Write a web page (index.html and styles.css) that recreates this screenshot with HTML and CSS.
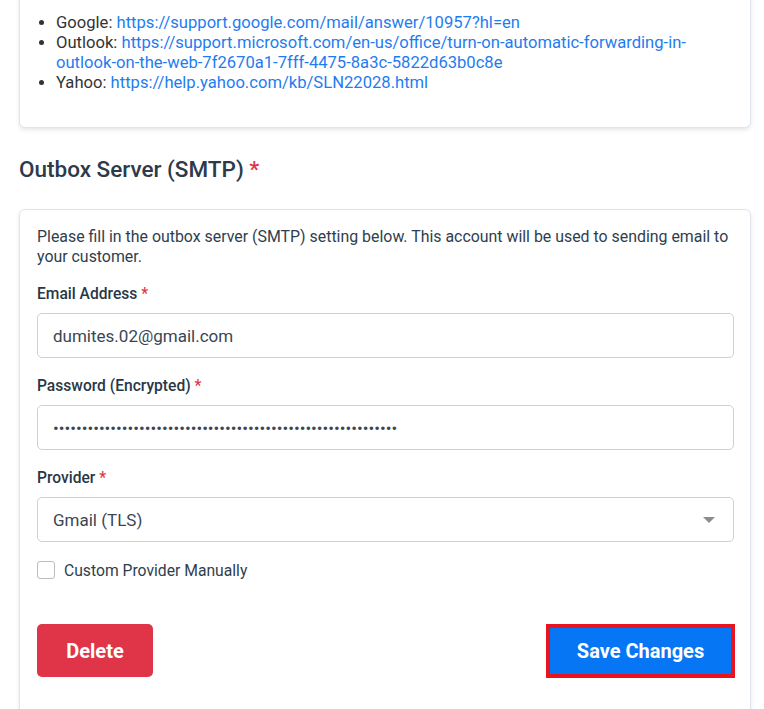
FILE: index.html
```html
<!DOCTYPE html>
<html>
<head>
<meta charset="utf-8">
<link rel="stylesheet" href="styles.css">
</head>
<body>
<div class="page">
  <div class="card card-top">
    <ul class="links">
      <li>Google: <a href="#">https://support.google.com/mail/answer/10957?hl=en</a></li>
      <li>Outlook: <a href="#">https://support.microsoft.com/en-us/office/turn-on-automatic-forwarding-in-outlook-on-the-web-7f2670a1-7fff-4475-8a3c-5822d63b0c8e</a></li>
      <li>Yahoo: <a href="#">https://help.yahoo.com/kb/SLN22028.html</a></li>
    </ul>
  </div>

  <h2 class="section-title">Outbox Server (SMTP) <span class="req">*</span></h2>

  <div class="card card-form">
    <p class="desc">Please fill in the outbox server (SMTP) setting below. This account will be used to sending email to your customer.</p>

    <div class="field">
      <label class="label">Email Address <span class="req">*</span></label>
      <input class="control" type="text" value="dumites.02@gmail.com">
    </div>

    <div class="field">
      <label class="label">Password (Encrypted) <span class="req">*</span></label>
      <input class="control" type="password" value="000000000000000000000000000000000000000000000000000000000000">
    </div>

    <div class="field">
      <label class="label">Provider <span class="req">*</span></label>
      <div class="select">
        <span>Gmail (TLS)</span>
        <span class="caret"></span>
      </div>
    </div>

    <label class="check-row">
      <span class="checkbox"></span>
      <span>Custom Provider Manually</span>
    </label>

    <div class="actions">
      <button class="btn btn-delete">Delete</button>
      <button class="btn btn-save">Save Changes</button>
    </div>
  </div>
</div>
</body>
</html>
```

FILE: styles.css
```css
* { box-sizing: border-box; }
html, body {
  margin: 0;
  padding: 0;
  background: #ffffff;
  font-family: Roboto, "Liberation Sans", sans-serif;
  color: #2b3a4a;
}
.page {
  padding: 0 13px 0 19px;
  margin-top: -28px;
}
.card {
  background: #fff;
  border: 1px solid #dfe5ea;
  border-radius: 6px;
  box-shadow: 0 2px 4px rgba(30, 50, 70, 0.12);
}
.card-top {
  padding: 40px 16px 34px 16px;
}
.links {
  margin: 0;
  padding-left: 20px;
  font-size: 16.6px;
  line-height: 20px;
  color: #333;
}
.links a {
  color: #1f7cf0;
  text-decoration: none;
}
.section-title {
  margin: 26px 0 25px 0;
  font-size: 22.5px;
  line-height: 30px;
  font-weight: 500;
  color: #2c3a49;
}
.req { color: #e03546; }
.card-form {
  padding: 17px 16px 48px 17px;
}
.desc {
  margin: 0 0 18px 0;
  font-size: 15.9px;
  line-height: 19.5px;
  color: #2f3e4e;
}
.field { margin-bottom: 18px; }
.label {
  display: block;
  font-size: 15.6px;
  line-height: 20px;
  font-weight: 500;
  color: #283747;
  margin-bottom: 9px;
}
.control, .select {
  display: flex;
  align-items: center;
  width: 100%;
  height: 45px;
  border: 1px solid #c7d3db;
  border-radius: 5px;
  padding: 0 15px;
  font-family: Roboto, "Liberation Sans", sans-serif;
  font-size: 17px;
  color: #3a4654;
  background: #fff;
  outline: none;
}
.select {
  justify-content: space-between;
}
.caret {
  width: 0;
  height: 0;
  border-left: 6px solid transparent;
  border-right: 6px solid transparent;
  border-top: 6px solid #8a8d90;
  margin-right: 3px;
}
.check-row {
  display: flex;
  align-items: center;
  gap: 9px;
  height: 20px;
  font-size: 15.7px;
  color: #2f3e4e;
}
.checkbox {
  width: 18px;
  height: 18px;
  border: 1px solid #b9bec3;
  border-radius: 3px;
  background: #fff;
}
.actions {
  display: flex;
  justify-content: space-between;
  align-items: center;
  margin-top: 44px;
}
.btn {
  font-family: Roboto, "Liberation Sans", sans-serif;
  font-size: 20px;
  font-weight: 700;
  color: #fff;
  border: none;
  cursor: pointer;
}
.btn-delete {
  width: 116px;
  height: 53px;
  border-radius: 5px;
  background: #e03548;
}
.btn-save {
  width: 181px;
  height: 46px;
  background: #0776f4;
  outline: 4px solid #e8141f;
  outline-offset: 0;
  margin-right: 3px;
}
```
